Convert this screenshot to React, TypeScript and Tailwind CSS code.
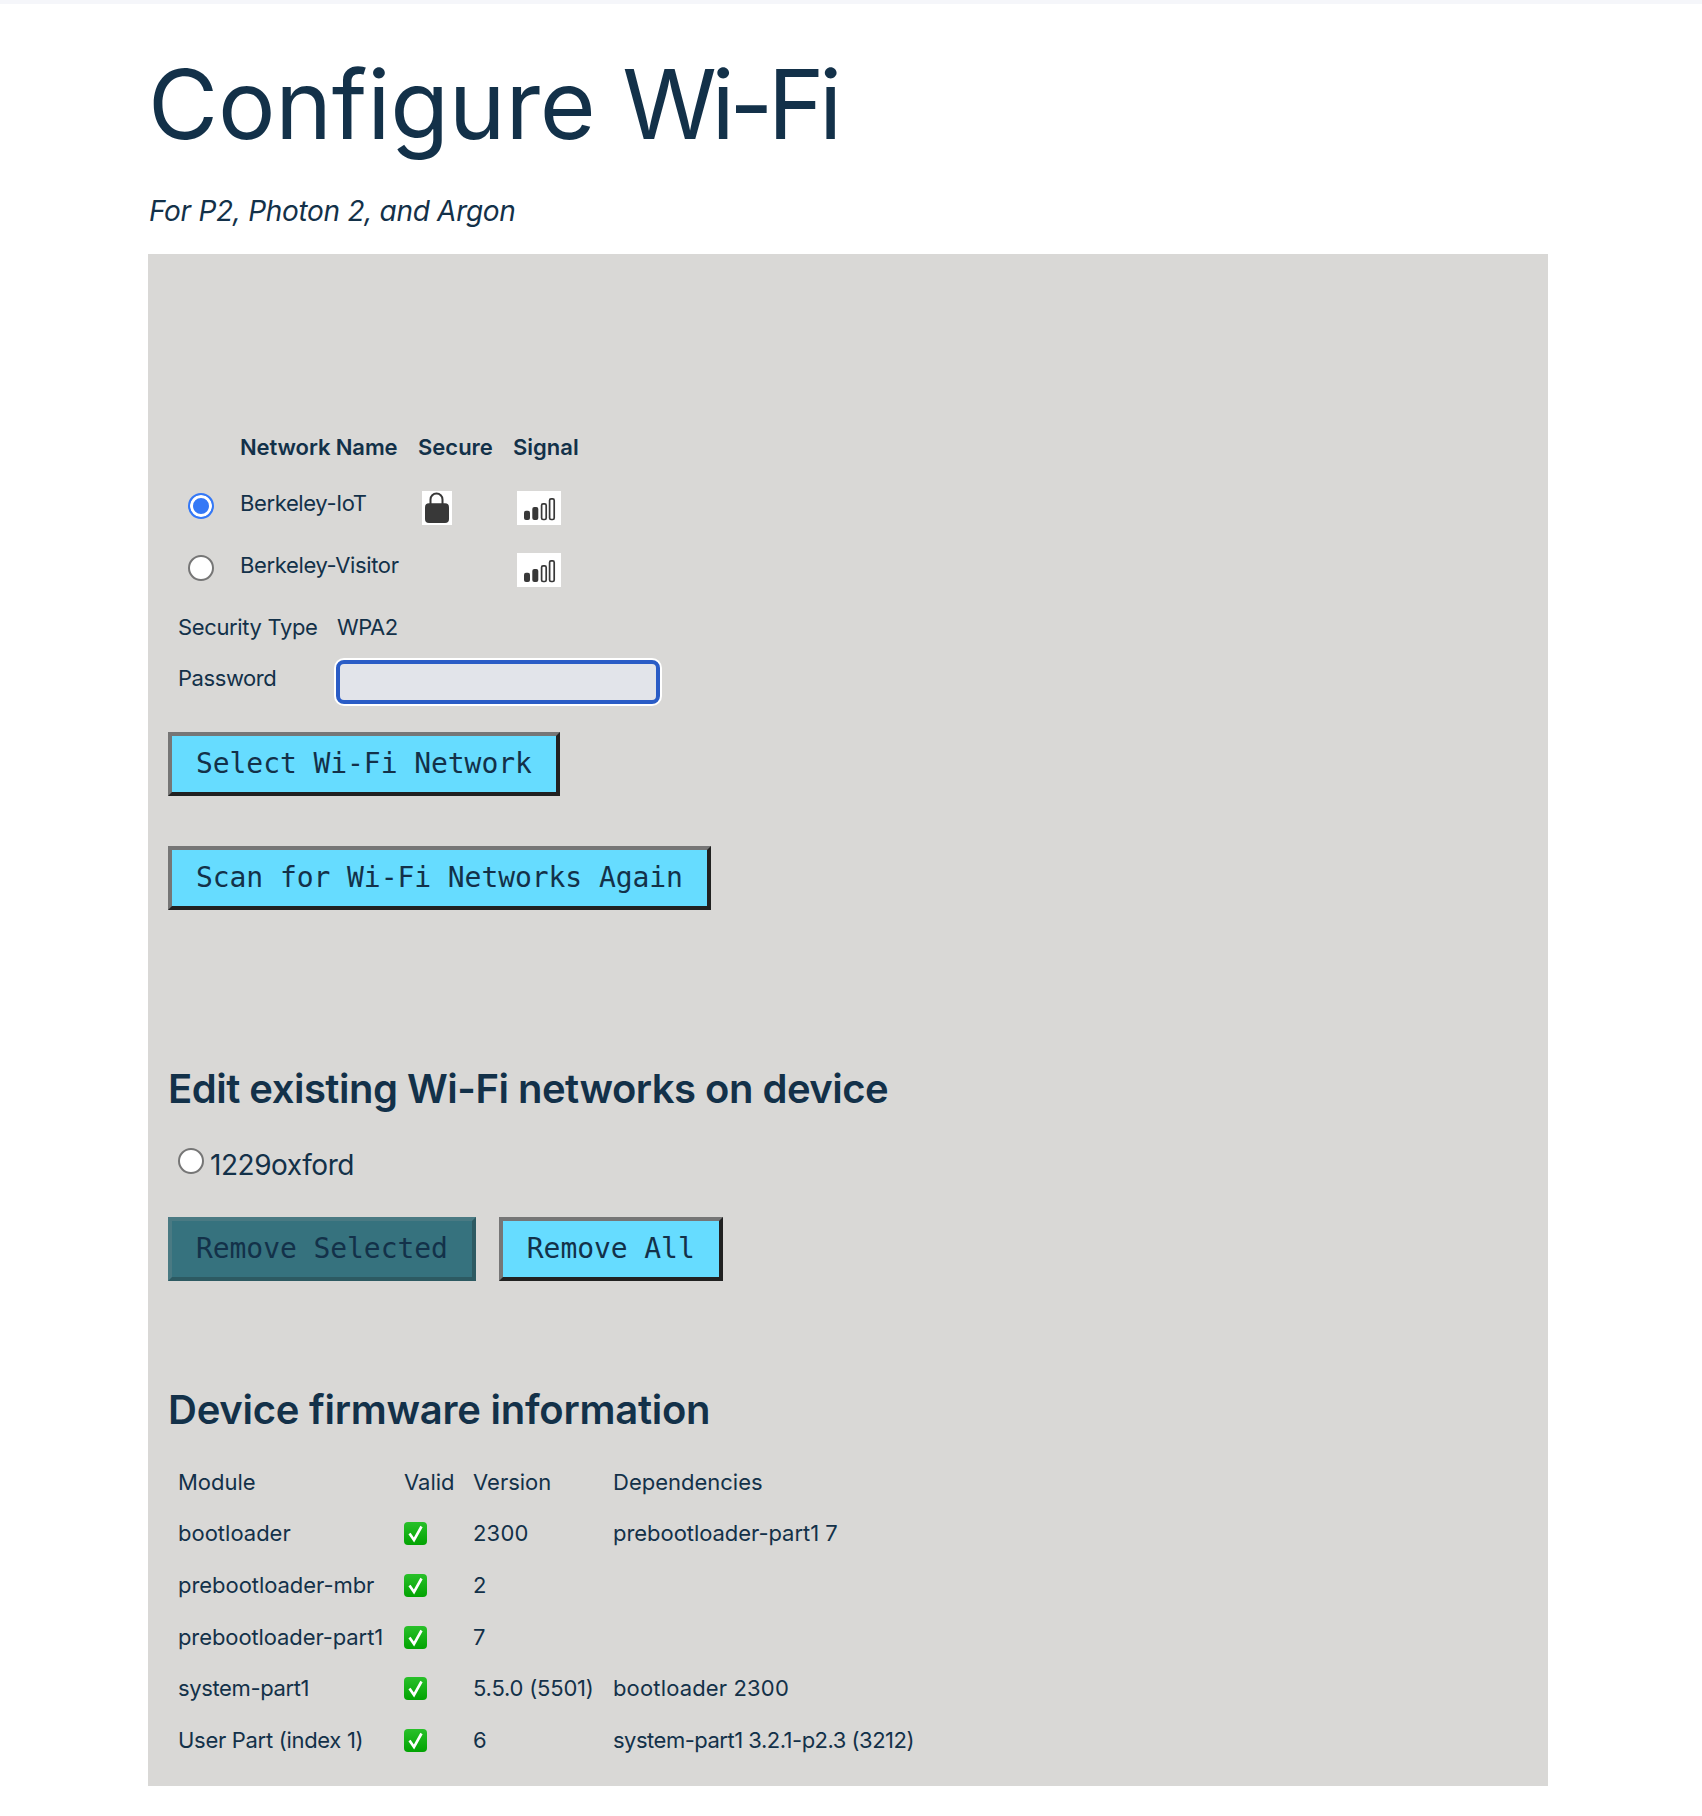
const font = { fontFamily: 'Inter, "Liberation Sans", sans-serif' };

function Lock() {
  return (
    <svg width="30" height="34" viewBox="0 0 30 34" className="block bg-white">
      <path d="M8.5 14V8.5a6 6 0 0 1 12 0V14" fill="none" stroke="#383838" strokeWidth="2" />
      <rect x="3" y="12.3" width="24" height="19.7" rx="4" fill="#383838" />
    </svg>
  );
}

function Signal() {
  return (
    <svg width="44" height="34" viewBox="0 0 44 34" className="block bg-white">
      <rect x="7" y="19.7" width="6" height="9.3" rx="2" fill="#383838" />
      <rect x="15.3" y="16" width="6" height="13" rx="2" fill="#383838" />
      <rect x="24.6" y="12.9" width="4.6" height="15.6" rx="1.5" fill="none" stroke="#383838" strokeWidth="1.7" />
      <rect x="32.6" y="7.9" width="4.6" height="20.6" rx="1.5" fill="none" stroke="#383838" strokeWidth="1.7" />
    </svg>
  );
}

function Check() {
  return (
    <svg width="23" height="23" viewBox="0 0 23 23" className="block">
      <defs>
        <linearGradient id="chk" x1="0" y1="0" x2="0" y2="1">
          <stop offset="0" stopColor="#29c02a" />
          <stop offset="1" stopColor="#02a302" />
        </linearGradient>
      </defs>
      <rect width="23" height="23" rx="4" fill="url(#chk)" />
      <path d="M5.5 11.5 L10 18 L17.5 4.5" fill="none" stroke="#fff" strokeWidth="2.6" />
    </svg>
  );
}

function Btn({ children, disabled }: { children: string; disabled?: boolean }) {
  return (
    <button
      className={
        disabled
          ? "h-16 border-4 border-t-[#4a7a83] border-l-[#4a7a83] border-r-[#2d5a62] border-b-[#2d5a62] bg-[#36727e] px-6 text-[28px] leading-none tracking-[-0.07px] text-[#133149]"
          : "h-16 border-4 border-t-[#767676] border-l-[#767676] border-r-[#212121] border-b-[#212121] bg-[#66dcff] px-6 text-[28px] leading-none tracking-[-0.07px] text-[#133149]"
      }
      style={{ fontFamily: '"DejaVu Sans Mono", "Liberation Mono", monospace' }}
    >
      {children}
    </button>
  );
}

const offRadio =
  "appearance-none block size-[26px] rounded-full border-2 border-[#767676] bg-white";

const modules = [
  { name: "bootloader", nameCls: "", version: "2300", verCls: "tracking-[0.2px]", deps: "prebootloader-part1 7", depCls: "tracking-[-0.05px]" },
  { name: "prebootloader-mbr", nameCls: "tracking-[-0.05px]", version: "2", verCls: "", deps: "", depCls: "" },
  { name: "prebootloader-part1", nameCls: "tracking-[-0.1px]", version: "7", verCls: "", deps: "", depCls: "" },
  { name: "system-part1", nameCls: "tracking-[-0.38px]", version: "5.5.0 (5501)", verCls: "tracking-[-0.2px]", deps: "bootloader 2300", depCls: "tracking-[0.15px]" },
  { name: "User Part (index 1)", nameCls: "tracking-[-0.3px]", version: "6", verCls: "", deps: "system-part1 3.2.1-p2.3 (3212)", depCls: "tracking-[-0.5px]" },
];

export default function App() {
  return (
    <div className="min-h-[1816px] bg-white text-[#133149]" style={font}>
      <div className="h-1 bg-[#f5f6fa]" />
      <main className="ml-[148px] w-[1400px]">
        <h1 className="pt-[42px] text-[96px] leading-[116px] font-normal tracking-[-0.2px]">
          Configure <span className="tracking-[-5.5px]">Wi-Fi</span>
        </h1>
        <p className="mt-[29px] pl-px text-[28px] leading-[40px] tracking-[-0.3px] italic">For P2, Photon 2, and Argon</p>
        <section className="mt-[23px] h-[1532px] whitespace-nowrap bg-[#d9d8d6] pt-[164px] pl-5 text-[22px]">
          <table className="border-collapse">
            <thead>
              <tr className="h-[58px]">
                <th className="w-[62px]" />
                <th className="w-[178px] pl-[10px] text-left font-semibold tracking-[-0.1px]">Network Name</th>
                <th className="w-[95px] pl-[10px] text-left font-semibold">Secure</th>
                <th className="pl-[10px] text-left font-semibold">Signal</th>
              </tr>
            </thead>
            <tbody>
              <tr className="h-[62px]">
                <td className="pb-[2px] pl-5">
                  <input
                    type="radio"
                    readOnly
                    checked
                    className="appearance-none block size-[26px] rounded-full border-2 border-[#3478f6] bg-[#3478f6] shadow-[inset_0_0_0_3px_white]"
                  />
                </td>
                <td className="pb-[7px] pl-[10px] tracking-[-0.38px]">Berkeley-IoT</td>
                <td className="pt-[2px] pl-[14px]"><Lock /></td>
                <td className="pt-[2px] pl-[14px]"><Signal /></td>
              </tr>
              <tr className="h-[62px]">
                <td className="pb-[2px] pl-5"><input type="radio" readOnly checked={false} className={offRadio} /></td>
                <td className="pb-[7px] pl-[10px] tracking-[-0.36px]">Berkeley-Visitor</td>
                <td />
                <td className="pt-[2px] pl-[14px]"><Signal /></td>
              </tr>
            </tbody>
          </table>
          <table className="mt-px border-collapse">
            <tbody>
              <tr className="h-[52px]">
                <td className="w-[169px] pl-[10px] tracking-[-0.36px]">Security Type</td>
                <td className="tracking-[-0.5px]">WPA2</td>
              </tr>
              <tr className="h-[58px]">
                <td className="pb-[8px] pl-[10px] tracking-[-0.43px]">Password</td>
                <td>
                  <input
                    type="password"
                    readOnly
                    className="-ml-px block h-[44px] w-[324px] rounded-[8px] border-4 border-[#2a5cc6] bg-[#e2e4ea] shadow-[0_0_0_2px_white]"
                  />
                </td>
              </tr>
            </tbody>
          </table>
          <div className="mt-[21px]"><Btn>Select Wi-Fi Network</Btn></div>
          <div className="mt-[50px]"><Btn>Scan for Wi-Fi Networks Again</Btn></div>
          <h2 className="mt-[154px] text-[40px] leading-[50px] font-semibold tracking-[-0.5px]">Edit existing Wi-Fi networks on device</h2>
          <label className="mt-[31px] flex items-center pl-[10px] text-[28px] leading-[40px] tracking-[-0.45px]">
            <input type="radio" readOnly checked={false} className={offRadio + " mr-[6px] mb-[8px]"} />
            1229oxford
          </label>
          <div className="mt-[32px] flex gap-[23px]">
            <Btn disabled>Remove Selected</Btn>
            <Btn>Remove All</Btn>
          </div>
          <h2 className="mt-[104px] text-[40px] leading-[50px] font-semibold tracking-[-0.25px]">Device firmware information</h2>
          <table className="mt-[22.5px] border-collapse">
            <thead>
              <tr className="h-[50.6px]">
                <th className="w-[226px] pl-[10px] text-left font-normal">Module</th>
                <th className="w-[69px] pl-[10px] text-left font-normal">Valid</th>
                <th className="w-[140px] pl-[10px] text-left font-normal">Version</th>
                <th className="pl-[10px] text-left font-normal">Dependencies</th>
              </tr>
            </thead>
            <tbody>
              {modules.map((m) => (
                <tr key={m.name} className="h-[51.6px]">
                  <td className={"pl-[10px] " + m.nameCls}>{m.name}</td>
                  <td className="pl-[10px]"><Check /></td>
                  <td className={"pl-[10px] " + m.verCls}>{m.version}</td>
                  <td className={"pl-[10px] " + m.depCls}>{m.deps}</td>
                </tr>
              ))}
            </tbody>
          </table>
        </section>
      </main>
    </div>
  );
}
